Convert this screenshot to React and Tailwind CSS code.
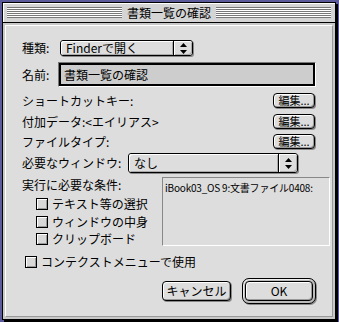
const Arrows = () => (
  <svg width="7" height="11" viewBox="0 0 7 11">
    <polygon points="3.5,0 7,4 0,4" fill="#000" />
    <polygon points="0,7 7,7 3.5,11" fill="#000" />
  </svg>
);

const Popup = ({ className, text }) => (
  <div className={className}>
    <div className="flex-1 flex items-center pl-[5px] bg-[#dddddd] rounded-l-[3px] shadow-[inset_1px_1px_0_#fff,inset_-1px_-1px_0_#aaa]">
      {text}
    </div>
    <div className="w-[19px] flex items-center justify-center border-l border-black bg-[#dddddd] rounded-r-[3px] shadow-[inset_1px_1px_0_#fff,inset_-1px_-1px_0_#aaa]">
      <Arrows />
    </div>
  </div>
);

const EditButton = () => (
  <div className="w-[42px] h-[15px] flex items-center justify-center border border-black rounded-[4px] bg-[#dddddd] shadow-[inset_1px_1px_0_#fff,inset_-1px_-1px_0_#999,1px_1px_0_#888] text-[11px] leading-none">
    編集...
  </div>
);

const Check = ({ label, className }) => (
  <div className={className}>
    <div className="w-[12px] h-[12px] border border-black bg-[#d8d8d8] shadow-[inset_1px_1px_0_#fff,inset_-1px_-1px_0_#999]" />
    <span className="ml-[4px] whitespace-nowrap">{label}</span>
  </div>
);

export default function App() {
  return (
    <div className="w-[339px] h-[322px] bg-[#5b5b9c] pl-[2px] pt-[2px] font-['Noto_Sans_CJK_JP',sans-serif] text-[12px] leading-none text-black">
      <div className="w-[334px] h-[318px] border border-black bg-[#c8c8c8] shadow-[2px_2px_0_#000] flex flex-col">
        {/* title bar */}
        <div className="h-[20px] flex items-center px-[4px] bg-[#d4d4d4] border-b border-black shadow-[inset_1px_1px_0_#fff]">
          <div className="flex-1 h-[11px] bg-[repeating-linear-gradient(to_bottom,#777_0px,#777_1px,#fff_1px,#fff_2px)]" />
          <div className="px-[5px] text-[12px]">書類一覧の確認</div>
          <div className="flex-1 h-[11px] bg-[repeating-linear-gradient(to_bottom,#777_0px,#777_1px,#fff_1px,#fff_2px)]" />
        </div>

        {/* content */}
        <div className="flex-1 p-[2px]">
          <div className="h-full bg-[#dddddd] border-t border-l border-white border-r border-b border-r-[#999] border-b-[#999] pl-[16px] pr-[16px] flex flex-col">
            <div className="mt-[14px] h-[16px] flex items-center">
              <span className="w-[38px]">種類:</span>
              <Popup className="w-[133px] h-[16px] flex border border-black rounded-[3px] shadow-[1px_1px_0_#888]" text="Finderで開く" />
            </div>

            <div className="mt-[6px] h-[25px] flex items-center">
              <span className="w-[36px]">名前:</span>
              <div className="w-[259px] h-[25px] border-t border-l border-[#777] border-b-white border-r-white border-b border-r">
                <div className="w-full h-full border-2 border-black bg-[#cdcdcd] flex items-center pl-[3px]">
                  書類一覧の確認
                </div>
              </div>
            </div>

            <div className="mt-[6px] h-[15px] flex items-center justify-between pr-[1px]">
              <span>ショートカットキー:</span>
              <EditButton />
            </div>
            <div className="mt-[6px] h-[15px] flex items-center justify-between pr-[1px]">
              <span>付加データ:&lt;エイリアス&gt;</span>
              <EditButton />
            </div>
            <div className="mt-[5px] h-[15px] flex items-center justify-between pr-[1px]">
              <span>ファイルタイプ:</span>
              <EditButton />
            </div>

            <div className="mt-[4px] h-[20px] flex items-center">
              <span className="w-[106px] whitespace-nowrap">必要なウィンドウ:</span>
              <Popup className="w-[170px] h-[20px] flex border border-black rounded-[3px] shadow-[1px_1px_0_#888]" text="なし" />
            </div>

            <div className="mt-[4px] h-[69px] flex">
              <div className="w-[140px] flex flex-col">
                <span className="mt-[2px] whitespace-nowrap">実行に必要な条件:</span>
                <Check className="mt-[7px] ml-[14px] flex items-center" label="テキスト等の選択" />
                <Check className="mt-[6px] ml-[14px] flex items-center" label="ウィンドウの中身" />
                <Check className="mt-[5px] ml-[14px] flex items-center" label="クリップボード" />
              </div>
              <div className="flex-1 -mr-[14px] border-t border-l border-[#888] border-b border-r border-b-white border-r-white pl-[2px] pt-[5px] text-[10px] tracking-[-0.2px] whitespace-nowrap">
                iBook03_OS 9:文書ファイル0408:
              </div>
            </div>

            <Check className="mt-[10px] ml-[3px] flex items-center" label="コンテクストメニューで使用" />

            <div className="mt-[10px] flex items-center justify-end">
              <div className="w-[69px] h-[20px] flex items-center justify-center border border-black rounded-[4px] bg-[#dddddd] shadow-[inset_1px_1px_0_#fff,inset_-1px_-1px_0_#999,1px_1px_0_#888]">
                キャンセル
              </div>
              <div className="ml-[11px] w-[74px] h-[26px] p-[2px] border border-black rounded-[7px] bg-[#bbbbbb] shadow-[inset_1px_1px_0_#eee,1px_1px_0_#888]">
                <div className="w-full h-full flex items-center justify-center border border-black rounded-[4px] bg-[#dddddd] shadow-[inset_1px_1px_0_#fff,inset_-1px_-1px_0_#999]">
                  OK
                </div>
              </div>
            </div>
          </div>
        </div>
      </div>
    </div>
  );
}
